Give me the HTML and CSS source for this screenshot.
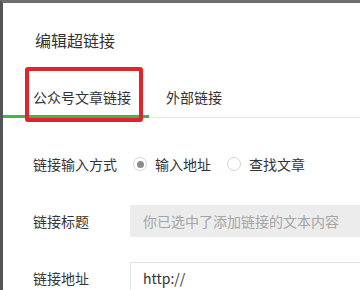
FILE: index.html
```html
<!DOCTYPE html>
<html lang="zh">
<head>
<meta charset="utf-8">
<link rel="stylesheet" href="styles.css">
</head>
<body>
<div class="dialog">
  <div class="title">编辑超链接</div>
  <div class="tabs">
    <div class="tab active">公众号文章链接<span class="mark"></span></div>
    <div class="tab">外部链接</div>
  </div>
  <div class="form">
    <div class="row">
      <div class="label">链接输入方式</div>
      <div class="radios">
        <label class="radio"><span class="dot checked"></span>输入地址</label>
        <label class="radio"><span class="dot"></span>查找文章</label>
      </div>
    </div>
    <div class="row">
      <div class="label">链接标题</div>
      <div class="input disabled">你已选中了添加链接的文本内容</div>
    </div>
    <div class="row">
      <div class="label">链接地址</div>
      <div class="input">http://</div>
    </div>
  </div>
</div>
</body>
</html>
```
FILE: styles.css
```css
html, body {
  margin: 0;
  padding: 0;
  width: 360px;
  height: 290px;
  overflow: hidden;
  background: #ffffff;
}
.dialog {
  box-sizing: border-box;
  width: 360px;
  height: 290px;
  border-top: 3px solid #6e6e6e;
  border-left: 3px solid #555555;
  background: #fff;
  font-family: "Noto Sans CJK SC", "Noto Sans", sans-serif;
  color: #333;
  overflow: hidden;
}
.title {
  padding: 25px 0 0 32px;
  font-size: 16px;
  line-height: 24px;
  color: #333;
}
.tabs {
  margin-top: 15px;
  display: flex;
  border-bottom: 1px solid #e4e4e4;
}
.tab {
  position: relative;
  font-size: 14px;
  line-height: 20px;
  padding: 20px 0 8px 17px;
  color: #333;
}
.tab.active {
  padding: 20px 18px 8px 30px;
  border-bottom: 3px solid #44b549;
  margin-bottom: -1px;
}
.mark {
  position: absolute;
  left: 22px;
  top: 0;
  width: 118px;
  height: 55px;
  box-sizing: border-box;
  border: 4px solid #e0242b;
  border-radius: 3px;
}
.form {
  padding: 30px 0 0 30px;
  display: flex;
  flex-direction: column;
  gap: 25px;
}
.row {
  display: flex;
  align-items: center;
  height: 32px;
}
.label {
  width: 97px;
  flex: none;
  font-size: 14px;
  color: #353535;
}
.radios {
  display: flex;
  align-items: center;
  gap: 16px;
  padding-left: 3px;
}
.radio {
  display: flex;
  align-items: center;
  gap: 8px;
  font-size: 14px;
  color: #333;
}
.dot {
  width: 14px;
  height: 14px;
  box-sizing: border-box;
  border: 1px solid #d4d4d4;
  border-radius: 50%;
  display: flex;
  align-items: center;
  justify-content: center;
}
.dot.checked::after {
  content: "";
  width: 7px;
  height: 7px;
  border-radius: 50%;
  background: #8c8c8c;
}
.input {
  box-sizing: border-box;
  width: 260px;
  flex: none;
  height: 32px;
  line-height: 30px;
  padding-left: 12px;
  font-size: 14px;
  border: 1px solid #e2e2e2;
  color: #333;
  white-space: nowrap;
}
.input.disabled {
  background: #ececec;
  border-color: #ececec;
  color: #a5a5a5;
}
```
